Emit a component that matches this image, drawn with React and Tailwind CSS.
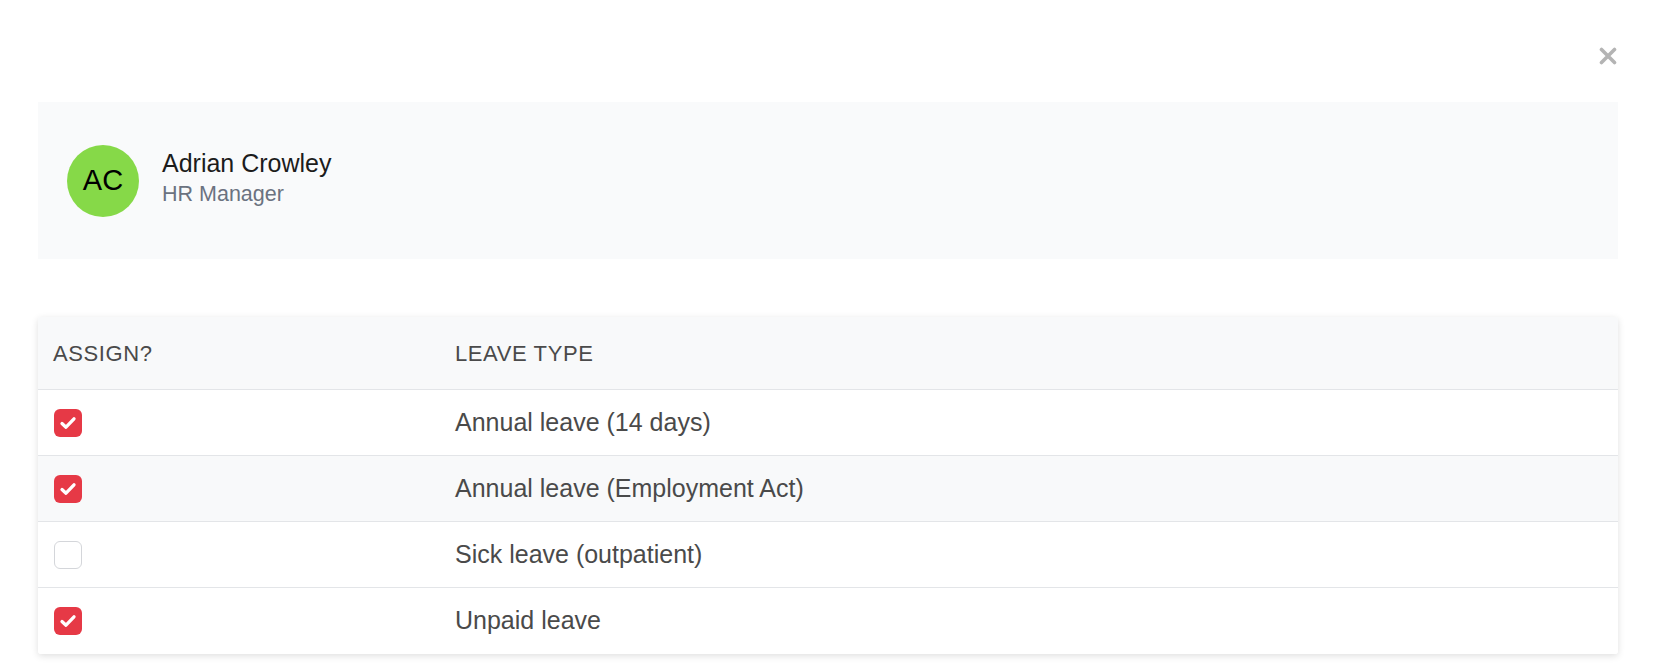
import React, { useState } from "react";

const leaveTypes = [
  { id: 1, name: "Annual leave (14 days)", assigned: true },
  { id: 2, name: "Annual leave (Employment Act)", assigned: true },
  { id: 3, name: "Sick leave (outpatient)", assigned: false },
  { id: 4, name: "Unpaid leave", assigned: true },
];

const Checkbox = ({ checked, onChange }) => (
  <button
    onClick={onChange}
    className={
      checked
        ? "w-[28px] h-[28px] rounded-[6px] bg-[#e63946] flex items-center justify-center"
        : "w-[28px] h-[28px] rounded-[6px] bg-white border border-[#d4d6da]"
    }
  >
    {checked && (
      <svg width="18" height="18" viewBox="0 0 18 18" fill="none">
        <path
          d="M3 9.5 L7 13.2 L15 4.8"
          stroke="white"
          strokeWidth="3.3"
          strokeLinecap="round"
          strokeLinejoin="round"
        />
      </svg>
    )}
  </button>
);

const App = () => {
  const [rows, setRows] = useState(leaveTypes);
  const hovered = 2;

  const toggle = (id) =>
    setRows(rows.map((r) => (r.id === id ? { ...r, assigned: !r.assigned } : r)));

  return (
    <div className="w-full min-h-[672px] bg-white font-['Liberation_Sans',Arial,sans-serif] pl-[38px] pr-[45px]">
      <div className="flex justify-end h-[102px] pt-[47px] pr-[1px]">
        <button className="w-[18px] h-[18px] text-[#b4b4b4]">
          <svg width="18" height="18" viewBox="0 0 18 18" fill="none">
            <path d="M2.5 2.5 L15.5 15.5 M15.5 2.5 L2.5 15.5" stroke="currentColor" strokeWidth="3.6" strokeLinecap="round" />
          </svg>
        </button>
      </div>

      <div className="bg-[#f9fafb] h-[157px] flex items-center pl-[29px] gap-[23px]">
        <div className="w-[72px] h-[72px] rounded-full bg-[#86d948] flex items-center justify-center text-[29px] text-black">
          AC
        </div>
        <div className="flex flex-col pb-[4px]">
          <span className="text-[25px] leading-[30px] text-[#1c1c1c]">Adrian Crowley</span>
          <span className="text-[21.5px] leading-[32px] text-[#6b7280]">HR Manager</span>
        </div>
      </div>

      <div className="mt-[58px] bg-white rounded-[3px] shadow-[0_2px_7px_rgba(0,0,0,0.13)] overflow-hidden">
        <div className="flex items-center h-[73px] bg-[#f8f9fa] border-b border-[#e3e5e8] text-[22px] text-[#4a4a4a] tracking-[0.6px]">
          <div className="w-[402px] pl-[15px]">ASSIGN?</div>
          <div className="pl-[15px]">LEAVE TYPE</div>
        </div>
        {rows.map((row, i) => (
          <div
            key={row.id}
            className={
              "flex items-center h-[66px] text-[25px] text-[#4a4a4a] " +
              (row.id === hovered ? "bg-[#f8f9fa] " : "bg-white ") +
              (i < rows.length - 1 ? "border-b border-[#e3e5e8]" : "")
            }
          >
            <div className="w-[402px] pl-[16px] flex items-center">
              <Checkbox checked={row.assigned} onChange={() => toggle(row.id)} />
            </div>
            <div className="pl-[15px]">{row.name}</div>
          </div>
        ))}
      </div>
    </div>
  );
};

export default App;
